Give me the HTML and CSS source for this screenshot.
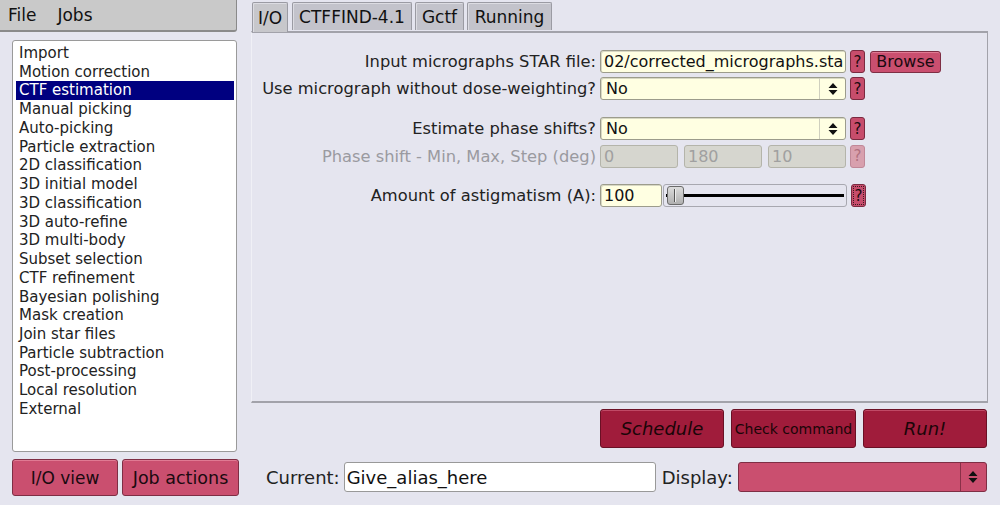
FILE: index.html
```html
<!DOCTYPE html>
<html>
<head>
<meta charset="utf-8">
<link rel="stylesheet" href="styles.css">
</head>
<body>
<div class="app">
  <div class="sidebar">
    <div class="menubar"><span class="menu">File</span><span class="menu">Jobs</span></div>
    <ul class="joblist">
      <li>Import</li>
      <li>Motion correction</li>
      <li class="sel">CTF estimation</li>
      <li>Manual picking</li>
      <li>Auto-picking</li>
      <li>Particle extraction</li>
      <li>2D classification</li>
      <li>3D initial model</li>
      <li>3D classification</li>
      <li>3D auto-refine</li>
      <li>3D multi-body</li>
      <li>Subset selection</li>
      <li>CTF refinement</li>
      <li>Bayesian polishing</li>
      <li>Mask creation</li>
      <li>Join star files</li>
      <li>Particle subtraction</li>
      <li>Post-processing</li>
      <li>Local resolution</li>
      <li>External</li>
    </ul>
    <div class="sidebtns">
      <div class="btn pink io">I/O view</div>
      <div class="btn pink ja">Job actions</div>
    </div>
  </div>
  <div class="main">
    <div class="tabs">
      <div class="tab active t1">I/O</div>
      <div class="tab t2">CTFFIND-4.1</div>
      <div class="tab t3">Gctf</div>
      <div class="tab t4">Running</div>
    </div>
    <div class="panel">
      <div class="row r1">
        <div class="label">Input micrographs STAR file:</div>
        <div class="field input w246">02/corrected_micrographs.sta</div>
        <div class="help">?</div>
        <div class="btn pink browse">Browse</div>
      </div>
      <div class="row r2">
        <div class="label">Use micrograph without dose-weighting?</div>
        <div class="field select w246"><span class="val">No</span><span class="arrows"><svg width="10" height="14" viewBox="0 0 10 14"><path d="M5 1 L9.5 6 L0.5 6 Z M0.5 8 L9.5 8 L5 13 Z" fill="#111"/></svg></span></div>
        <div class="help">?</div>
      </div>
      <div class="row r3">
        <div class="label">Estimate phase shifts?</div>
        <div class="field select w246"><span class="val">No</span><span class="arrows"><svg width="10" height="14" viewBox="0 0 10 14"><path d="M5 1 L9.5 6 L0.5 6 Z M0.5 8 L9.5 8 L5 13 Z" fill="#111"/></svg></span></div>
        <div class="help">?</div>
      </div>
      <div class="row r4 disabled">
        <div class="label">Phase shift - Min, Max, Step (deg)</div>
        <div class="field input dis w78">0</div>
        <div class="field input dis w78 gap6">180</div>
        <div class="field input dis w78 gap6">10</div>
        <div class="help dishelp">?</div>
      </div>
      <div class="row r5">
        <div class="label">Amount of astigmatism (A):</div>
        <div class="field input w62">100</div>
        <div class="slider"><div class="track"></div><div class="thumb"></div></div>
        <div class="help focus">?</div>
      </div>
    </div>
    <div class="actions">
      <div class="btn run italic">Schedule</div>
      <div class="btn run small">Check command</div>
      <div class="btn run italic">Run!</div>
    </div>
    <div class="bottom">
      <span class="blabel">Current:</span>
      <div class="alias">Give_alias_here</div>
      <span class="blabel dlabel">Display:</span>
      <div class="display"><span class="arrows"><svg width="10" height="14" viewBox="0 0 10 14"><path d="M5 1 L9.5 6 L0.5 6 Z M0.5 8 L9.5 8 L5 13 Z" fill="#111"/></svg></span></div>
    </div>
  </div>
</div>
</body>
</html>
```
FILE: styles.css
```css
* { box-sizing: border-box; }
html, body {
  margin: 0;
  padding: 0;
  width: 1000px;
  height: 505px;
  overflow: hidden;
  background: #e5e5ef;
  font-family: "DejaVu Sans", sans-serif;
  color: #222;
}
.app {
  display: flex;
  height: 505px;
}
.sidebar {
  width: 241px;
  display: flex;
  flex-direction: column;
}
.menubar {
  width: 237px;
  height: 32px;
  background: #c9c9c9;
  border-right: 1px solid #8a8a8a;
  border-bottom: 2px solid #8a8a8a;
  border-bottom-right-radius: 3px;
  display: flex;
  align-items: center;
  padding-left: 8px;
  font-size: 17px;
  color: #111;
}
.menu { margin-right: 21px; }
.joblist {
  list-style: none;
  margin: 8px 0 0 12px;
  padding: 3px 2px 0 3px;
  width: 225px;
  height: 412px;
  background: #fff;
  border: 1px solid #9a9a9a;
  border-radius: 3px;
  font-size: 15px;
  color: #222;
}
.joblist li {
  height: 18.74px;
  line-height: 18.74px;
  padding-left: 3px;
  white-space: nowrap;
}
.joblist li.sel {
  background: #000080;
  color: #fff;
}
.sidebtns {
  display: flex;
  margin: 7px 0 0 12px;
  gap: 4px;
}
.btn {
  display: flex;
  align-items: center;
  justify-content: center;
  border-radius: 3px;
  white-space: nowrap;
}
.pink {
  background: #ca4f6f;
  border: 1px solid #7e2e44;
  box-shadow: inset 0 1px 0 #e07a93;
  color: #1a0a0f;
}
.io { width: 106px; height: 37px; font-size: 17px; }
.ja { width: 117px; height: 37px; font-size: 17.5px; }
.main {
  margin-left: 10px;
  width: 749px;
  display: flex;
  flex-direction: column;
}
.tabs {
  display: flex;
  height: 31px;
  padding-top: 2px;
  gap: 4px;
  padding-left: 1px;
}
.tab {
  height: 28px;
  background: #c3c3cb;
  border: 1px solid #9b9ba3;
  border-bottom: none;
  border-top-left-radius: 2px;
  border-top-right-radius: 2px;
  font-size: 17px;
  display: flex;
  align-items: center;
  justify-content: center;
  color: #111;
  box-shadow: inset 1px 1px 0 #dcdce2;
}
.tab.active {
  background: #c7c7cb;
  height: 30px;
  position: relative;
  z-index: 1;
  margin-bottom: -2px;
}
.t1 { width: 36px; }
.t2 { width: 120px; }
.t3 { width: 49px; margin-left: -1px; }
.t4 { width: 85px; margin-left: -1px; }
.panel {
  width: 737px;
  height: 372px;
  border-top: 2px solid #a2a2aa;
  border-right: 1px solid #a2a2aa;
  border-bottom: 2px solid #a2a2aa;
  border-left: 1px solid #f0f0f6;
  padding-top: 17px;
}
.row {
  display: flex;
  align-items: center;
  height: 23px;
  font-size: 16.3px;
}
.r2 { margin-top: 4px; }
.r3 { margin-top: 17px; }
.r4 { margin-top: 5px; height: 22px; }
.r5 { margin-top: 17px; }
.label {
  width: 348px;
  text-align: right;
  padding-right: 4px;
  white-space: nowrap;
  color: #222;
}
.disabled .label { color: #9a9aa0; }
.field {
  height: 23px;
  border: 1px solid #9c9c8c;
  border-radius: 3px;
  background: #ffffe2;
  box-shadow: inset 1px 1px 0 #d8d8c4;
  display: flex;
  align-items: center;
  padding-left: 3px;
  color: #111;
  white-space: nowrap;
  overflow: hidden;
}
.input { font-size: 16px; }
.select { font-size: 16px; justify-content: space-between; padding-left: 5px; padding-right: 0; }
.select .arrows, .display .arrows {
  width: 26px;
  height: 100%;
  display: flex;
  align-items: center;
  justify-content: center;
  border-left: 1px solid #cfcfbe;
}
.w246 { width: 246px; }
.w78 { width: 78px; }
.w62 { width: 62px; }
.gap6 { margin-left: 6px; }
.dis {
  background: #d6d6cf;
  color: #a0a0a0;
  border-color: #b4b4aa;
  box-shadow: none;
}
.help {
  width: 15px;
  height: 23px;
  margin-left: 4px;
  background: #c74d6c;
  border: 1px solid #7a2a40;
  border-radius: 3px;
  font-size: 15px;
  display: flex;
  align-items: center;
  justify-content: center;
  color: #1a0a0f;
}
.dishelp {
  background: #d8a0ae;
  border-color: #c08898;
  color: #b07080;
}
.focus { outline: 1px dotted #3a1a20; outline-offset: -3px; }
.browse {
  width: 71px;
  height: 22px;
  margin-left: 5px;
  font-size: 16px;
}
.slider {
  position: relative;
  width: 184px;
  height: 23px;
  margin-left: 1px;
  border: 1px solid #a8a8b0;
  border-radius: 3px;
}
.track {
  position: absolute;
  left: 2px;
  right: 2px;
  top: 9px;
  height: 3px;
  background: #000;
}
.thumb {
  position: absolute;
  left: 3px;
  top: 1px;
  width: 17px;
  height: 19px;
  border: 1px solid #6a6a6a;
  border-radius: 3px;
  background: linear-gradient(#dcdcdc, #b0b0b0);
}
.thumb::after {
  content: "";
  position: absolute;
  left: 6px;
  top: 2px;
  width: 1px;
  height: 13px;
  background: #555;
  box-shadow: 1px 0 0 #eee;
}
.actions {
  display: flex;
  margin-top: 6px;
  margin-left: 349px;
  gap: 7px;
}
.run {
  width: 124px;
  height: 39px;
  background: #a01c3b;
  border: 1px solid #6a1025;
  box-shadow: inset 0 1px 0 #c04a66;
  color: #1a0508;
}
.run.small { font-size: 14px; width: 125px; }
.italic { font-style: italic; font-size: 18px; }
.bottom {
  display: flex;
  align-items: center;
  margin-top: 14px;
  height: 30px;
  font-size: 18px;
}
.blabel { margin-left: 15px; color: #222; }
.dlabel { margin-left: 6px; }
.alias {
  width: 312px;
  height: 30px;
  margin-left: 4px;
  background: #fff;
  border: 1px solid #999;
  border-radius: 3px;
  padding-left: 2px;
  display: flex;
  align-items: center;
  color: #111;
}
.display {
  width: 249px;
  height: 30px;
  margin-left: 5px;
  background: #ca4f6f;
  border: 1px solid #7e2e44;
  border-radius: 3px;
  display: flex;
  justify-content: flex-end;
}
.display .arrows { border-left: 1px solid #8a3048; }
```
